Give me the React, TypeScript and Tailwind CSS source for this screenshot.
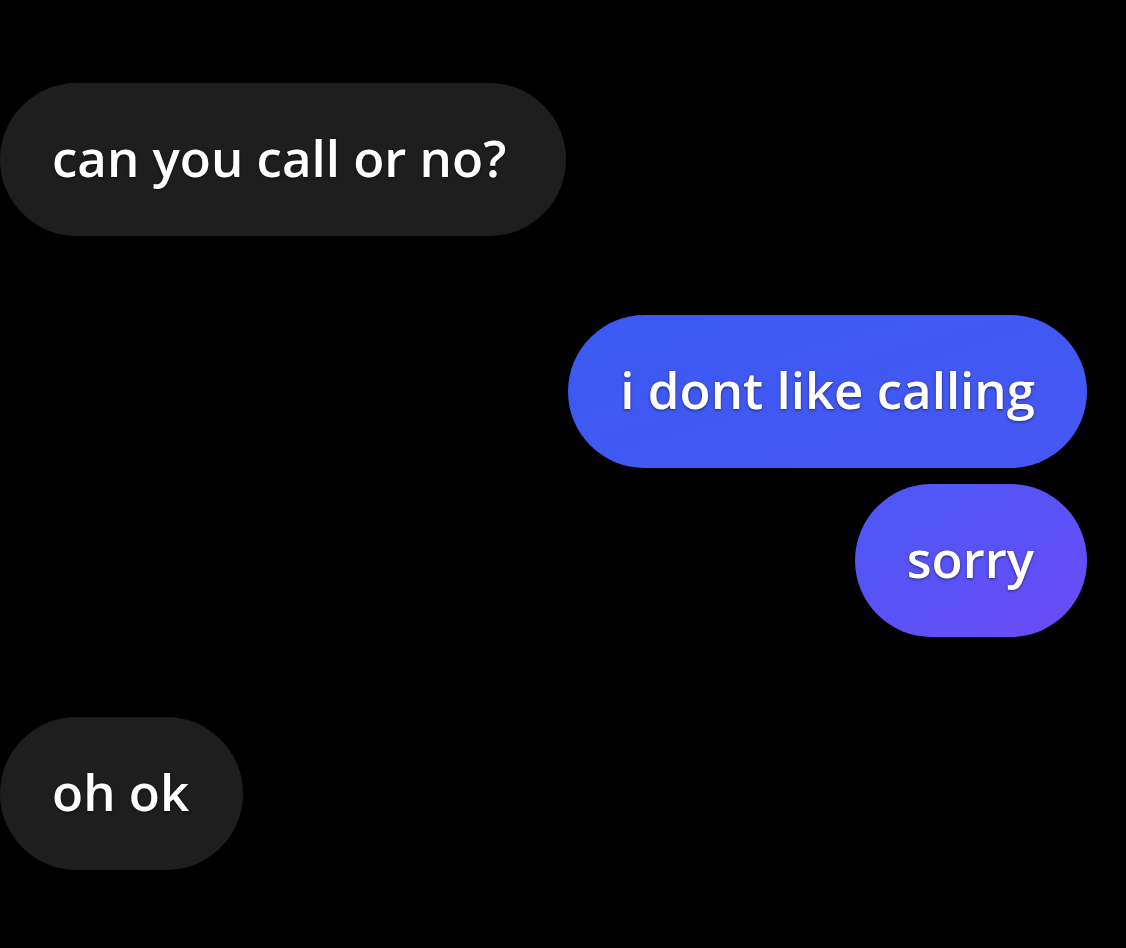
import React from "react";

type Message = {
  id: number;
  text: string;
  mine: boolean;
};

const messages: Message[] = [
  { id: 1, text: "can you call or no?", mine: false },
  { id: 2, text: "i dont like calling", mine: true },
  { id: 3, text: "sorry", mine: true },
  { id: 4, text: "oh ok", mine: false },
];

function Bubble({ msg, className = "" }: { msg: Message; className?: string }) {
  return (
    <div
      className={`h-[153px] flex items-center rounded-full pl-[52px] pb-[4px] text-[51px] font-semibold text-white leading-none whitespace-nowrap [text-shadow:0_1px_3px_rgba(0,0,0,0.55)] ${className}`}
    >
      {msg.text}
    </div>
  );
}

export default function App() {
  const [first, second, third, fourth] = messages;

  return (
    <main
      className="min-h-screen w-full bg-black pr-[39px] pt-[83px]"
      style={{ fontFamily: "'Open Sans', 'Liberation Sans', sans-serif" }}
    >
      <div className="flex flex-col">
        {/* incoming */}
        <div className="flex">
          <Bubble msg={first} className="bg-[#1e1e1e] pr-[60px]" />
        </div>

        {/* outgoing pair */}
        <div className="mt-[79px] flex flex-col items-end gap-[16px]">
          <Bubble
            msg={second}
            className="bg-linear-to-br from-[#3a5af1] to-[#4757f4] pr-[52px]"
          />
          <Bubble
            msg={third}
            className="bg-linear-to-br from-[#4c58f5] via-[#5953f6] to-[#6d49f6] pr-[53px]"
          />
        </div>

        <div className="mt-[80px] flex">
          <Bubble msg={fourth} className="bg-[#1e1e1e] pr-[54px]" />
        </div>
      </div>
    </main>
  );
}
